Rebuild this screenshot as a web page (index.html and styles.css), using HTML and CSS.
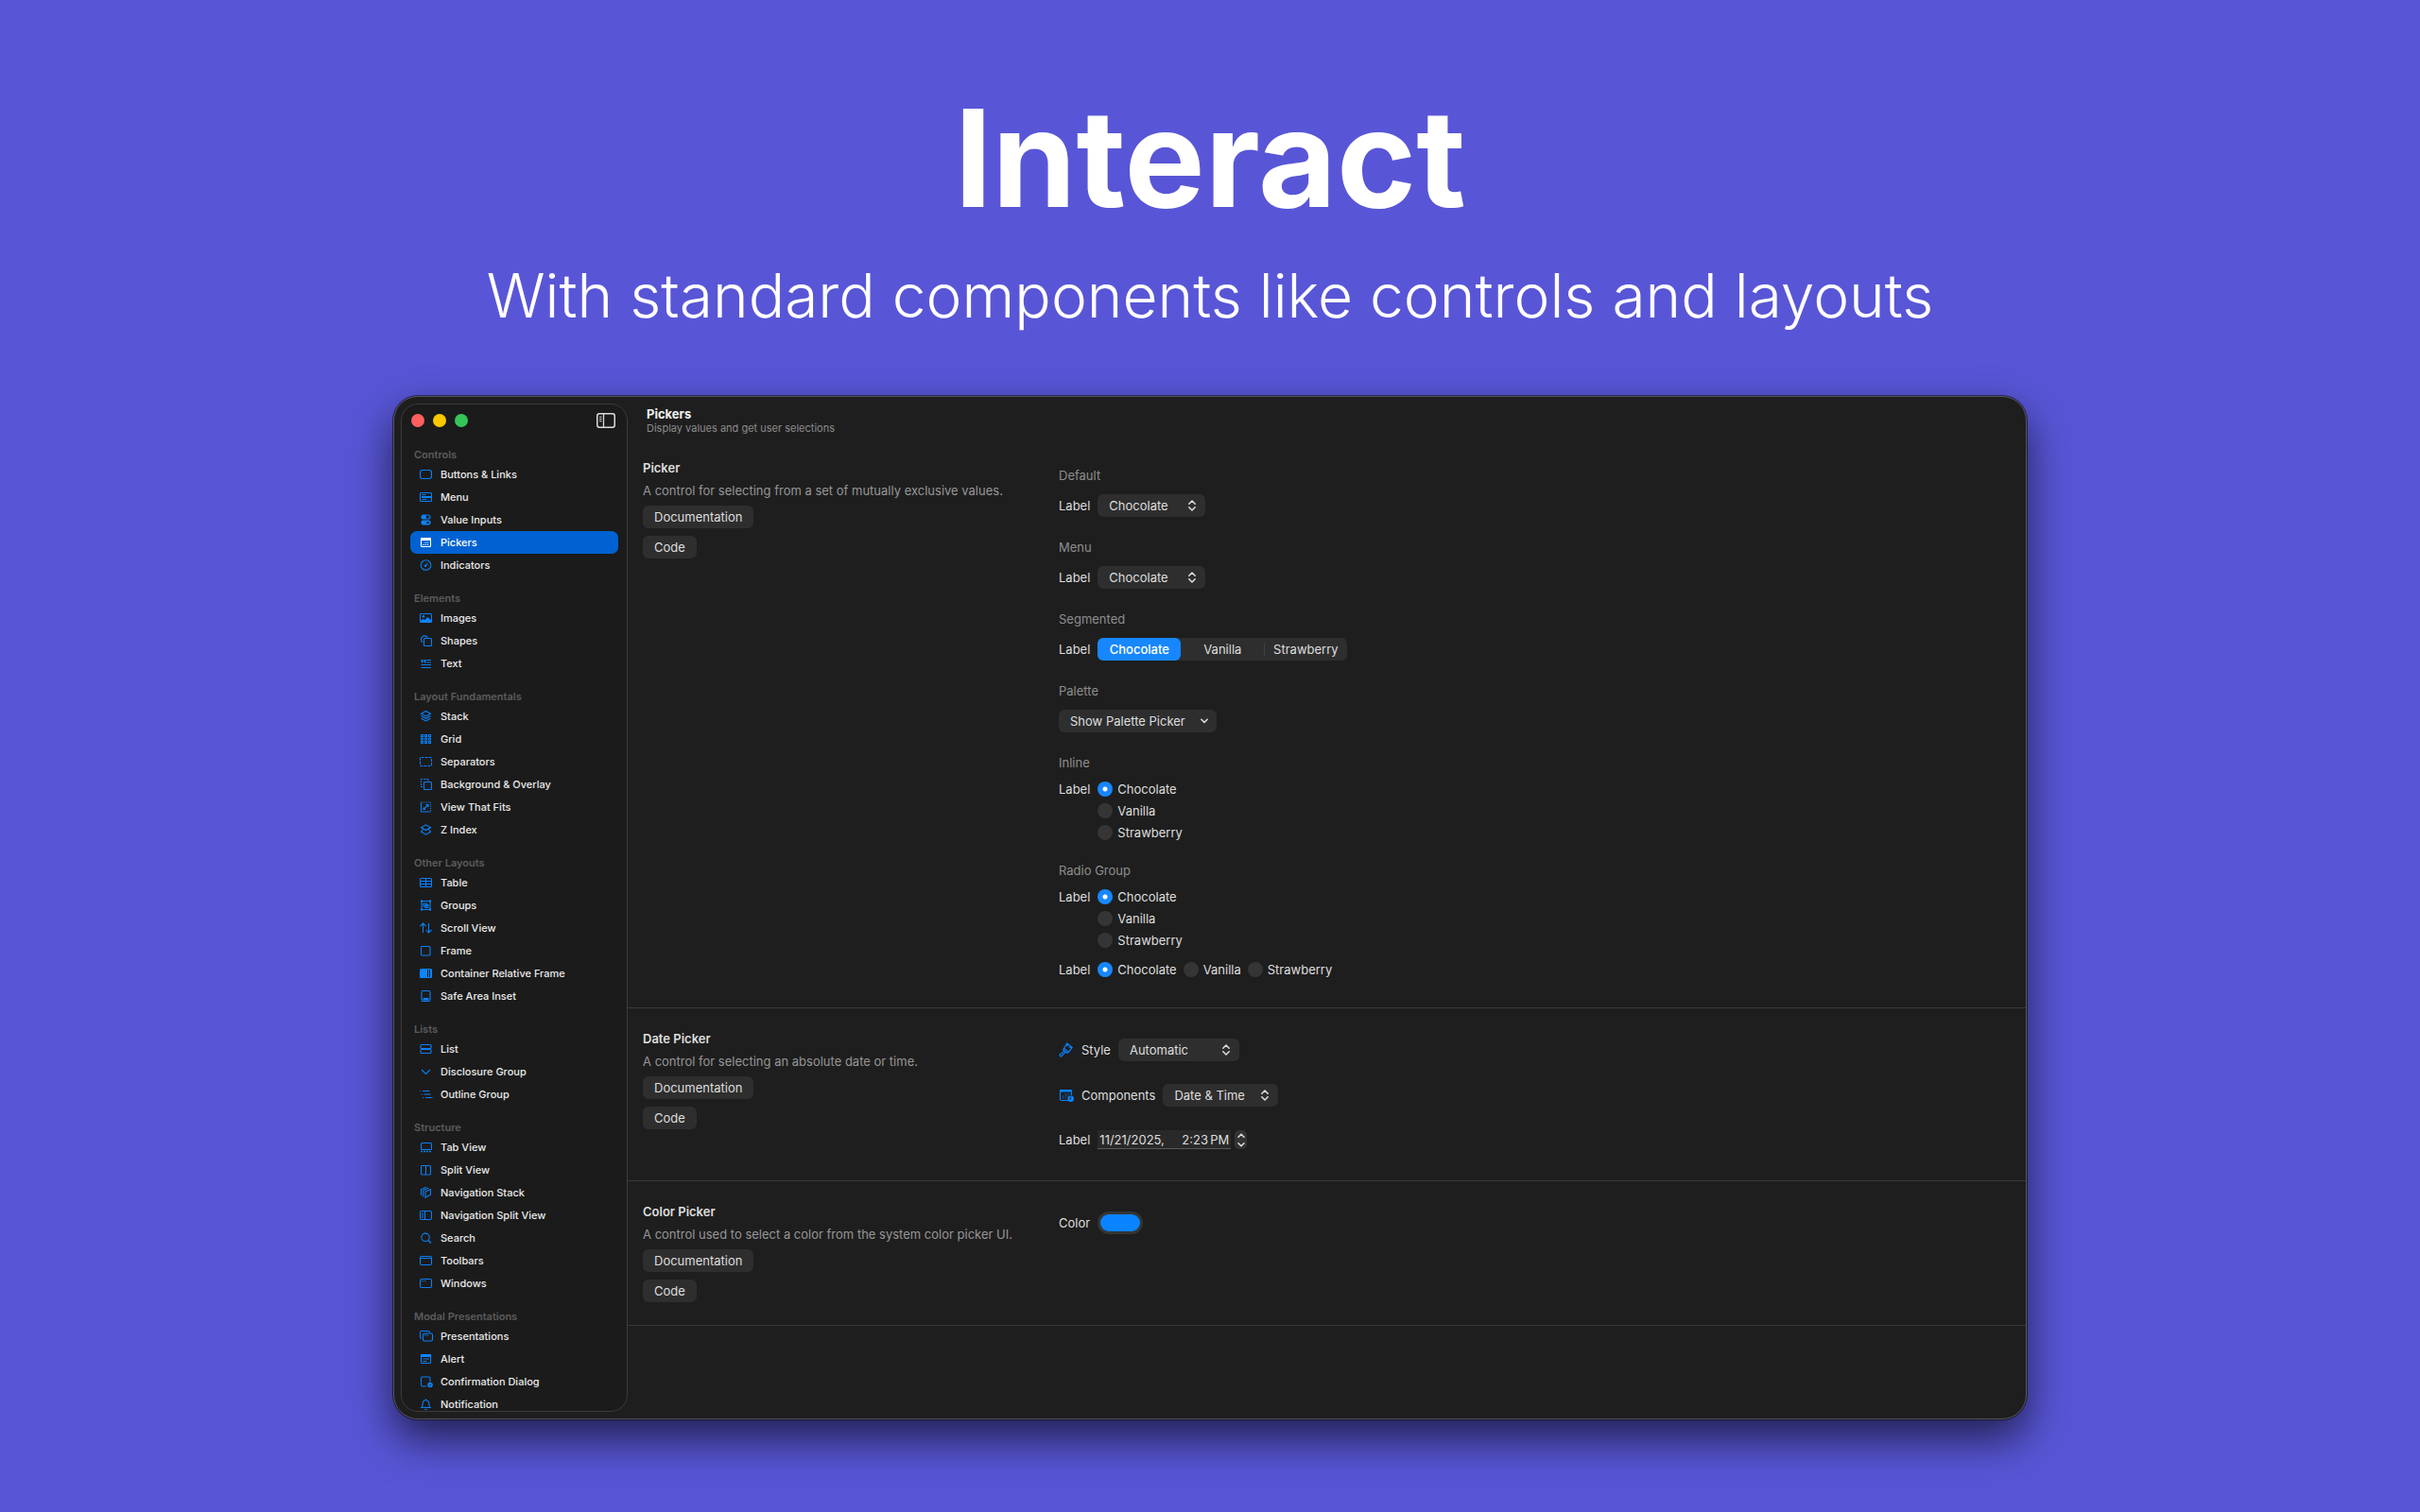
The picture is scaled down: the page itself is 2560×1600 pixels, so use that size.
FILE: index.html
```html
<!DOCTYPE html>
<html lang="en">
<head>
<meta charset="utf-8">
<title>Interact</title>
<link rel="stylesheet" href="styles.css">
</head>
<body>
<header class="hero">
  <h1 class="hero-title">Interact</h1>
  <p class="hero-subtitle">With standard components like controls and layouts</p>
</header>

<main class="window">
  <aside class="sidebar">
    <div class="titlebar">
      <button class="light light-close" type="button" aria-label="Close"></button>
      <button class="light light-minimize" type="button" aria-label="Minimize"></button>
      <button class="light light-zoom" type="button" aria-label="Zoom"></button>
      <button class="sidebar-toggle" type="button" aria-label="Toggle sidebar">
        <svg width="20" height="16" viewBox="0 0 20 16"><rect x=".75" y=".75" width="18.5" height="14.5" rx="2.5" fill="none" stroke="#dcdcdc" stroke-width="1.5"/><path d="M7.5 1v14" stroke="#dcdcdc" stroke-width="1.3"/><path d="M3 4.3h2.500M3 6.500h2.500M3 8.700h2.500" stroke="#dcdcdc" stroke-width="1.100"/></svg>
      </button>
    </div>
    <nav class="nav">
      <h2 class="nav-heading">Controls</h2>
      <a class="nav-item" href="#"><svg class="icon" viewBox="0 0 16 14"><rect x="1.500" y="2.500" width="12" height="9" rx="2.500"/></svg>Buttons &amp; Links</a>
      <a class="nav-item" href="#"><svg class="icon" viewBox="0 0 16 14"><rect x="1.500" y="2.500" width="12" height="9" rx="1"/><path d="M3.500 4.500h4M3.500 9.500h5"/><path class="fill" d="M3 6h11v2H3z"/></svg>Menu</a>
      <a class="nav-item" href="#"><svg class="icon" viewBox="0 0 16 14"><rect x="3" y="2" width="9" height="4" rx="2"/><rect class="fill" x="3" y="2" width="5" height="4" rx="1.500"/><rect class="fill" x="2.500" y="7.500" width="10" height="5" rx="2"/><rect class="hole" x="8" y="9" width="3" height="2" rx="1"/></svg>Value Inputs</a>
      <a class="nav-item nav-item-selected" href="#" aria-current="page"><svg class="icon" viewBox="0 0 16 14"><rect x="2.500" y="2.500" width="10" height="9" rx="1"/><path class="fill" d="M2 2h11v3H2z"/><path d="M4.300 9.500h1.200M6.500 9.500h1.200M8.700 9.500h1.200M6.500 7.300h1.200M8.700 7.300h1.200"/></svg>Pickers</a>
      <a class="nav-item" href="#"><svg class="icon" viewBox="0 0 16 14"><circle cx="7.500" cy="7" r="5.300"/><path d="M7 7.800 9.500 5"/><circle class="fill" cx="7" cy="7.700" r="1.200"/><path stroke-width=".7" d="M4.500 7h.5M7.500 3.500v.7M5 4.600l.5.5M10.500 7.500h.5"/></svg>Indicators</a>

      <h2 class="nav-heading">Elements</h2>
      <a class="nav-item" href="#"><svg class="icon" viewBox="0 0 16 14"><rect x="1.500" y="2.500" width="12" height="9" rx="1"/><circle class="fill" cx="5" cy="5.200" r="1.200"/><path class="fill" d="M2 9.500 4.500 7.800 6 9 9.500 6 13 9.200V11.500H2z"/></svg>Images</a>
      <a class="nav-item" href="#"><svg class="icon" viewBox="0 0 16 14"><path d="M4 8.800A3.800 3.800 0 1 1 9.300 3.500"/><rect x="5.500" y="4.500" width="8" height="8" rx="1"/></svg>Shapes</a>
      <a class="nav-item" href="#"><svg class="icon" viewBox="0 0 16 14"><path d="M8.500 3.500H13M8.500 6H13M2.500 8.500H13M2.500 11.500H13"/><path class="fill" d="M2.500 3h2v3L3 7V5h-.5zM5.500 3h2v3L6 7V5h-.5z"/></svg>Text</a>

      <h2 class="nav-heading">Layout Fundamentals</h2>
      <a class="nav-item" href="#"><svg class="icon" viewBox="0 0 16 14"><path d="M2.500 4.200 7.500 1.500l5 2.700-5 2.700zM2.500 6.600l5 2.700 5-2.700M2.500 9.200l5 2.700 5-2.700"/></svg>Stack</a>
      <a class="nav-item" href="#"><svg class="icon" viewBox="0 0 16 14"><path d="M2.500 2.500h2v2h-2zM6.500 2.500h2v2h-2zM10.500 2.500h2v2h-2zM2.500 6h2v2h-2zM6.500 6h2v2h-2zM10.500 6h2v2h-2zM2.500 9.500h2v2h-2zM6.500 9.500h2v2h-2zM10.500 9.500h2v2h-2z"/></svg>Grid</a>
      <a class="nav-item" href="#"><svg class="icon" viewBox="0 0 16 14"><rect x="1.500" y="2.500" width="12" height="9" rx="1" stroke-dasharray="3 1"/></svg>Separators</a>
      <a class="nav-item" href="#"><svg class="icon" viewBox="0 0 16 14"><path stroke-dasharray="2 1" d="M4 9.500H2.500v-8h8V3"/><rect x="5.500" y="4.500" width="8" height="8" rx="1"/></svg>Background &amp; Overlay</a>
      <a class="nav-item" href="#"><svg class="icon" viewBox="0 0 16 14"><path stroke-dasharray="1 1" d="M2.500 2H12.500V12"/><path d="M2.500 2v10H12.500M5 9.500l5-5M7.500 4.500H10V7M5 7.500v2h2"/></svg>View That Fits</a>
      <a class="nav-item" href="#"><svg class="icon" viewBox="0 0 16 14"><path d="M2.500 4.700 7.500 1.800l5 2.900-5 2.900zM4.500 6.500l-2 2.800 5 2.900 5-2.900-2-2.800"/></svg>Z Index</a>

      <h2 class="nav-heading">Other Layouts</h2>
      <a class="nav-item" href="#"><svg class="icon" viewBox="0 0 16 14"><rect x="1.500" y="2.500" width="12" height="9" rx="1"/><path d="M7.500 2.500v9M1.500 5.500h12M1.500 8.500h12"/></svg>Table</a>
      <a class="nav-item" href="#"><svg class="icon" viewBox="0 0 16 14"><rect x="3" y="2.500" width="9" height="9"/><path d="M5 5h3.500v3H5zM7 6.500h3v3H7z"/><path class="fill" d="M2 1.500h2v2H2zM11 1.500h2v2h-2zM2 10.500h2v2H2zM11 10.500h2v2h-2z"/></svg>Groups</a>
      <a class="nav-item" href="#"><svg class="icon" viewBox="0 0 16 14"><path d="M4.500 12V2.300M1.500 5l3-3 3 3M10.500 2v9.700M7.800 9l2.700 3 3-3"/></svg>Scroll View</a>
      <a class="nav-item" href="#"><svg class="icon" viewBox="0 0 16 14"><rect x="2.500" y="2.500" width="9.500" height="9.500" rx="1"/></svg>Frame</a>
      <a class="nav-item" href="#"><svg class="icon" viewBox="0 0 16 14"><rect x="1.500" y="2.500" width="12" height="9" rx="1"/><path class="fill" d="M2 3h7v8H2zM10 3h1v8h-1zM12 3h2v8h-2z"/></svg>Container Relative Frame</a>
      <a class="nav-item" href="#"><svg class="icon" viewBox="0 0 16 14"><rect x="3" y="1.500" width="9" height="11" rx="1.500"/><path class="fill" d="M4.500 9h6v2.500h-6z"/></svg>Safe Area Inset</a>

      <h2 class="nav-heading">Lists</h2>
      <a class="nav-item" href="#"><svg class="icon" viewBox="0 0 16 14"><rect x="2" y="2.500" width="11" height="4" rx="1"/><rect x="2" y="7.500" width="11" height="4" rx="1"/></svg>List</a>
      <a class="nav-item" href="#"><svg class="icon" viewBox="0 0 16 14"><path d="m3 5 4.500 4.500L12 5"/></svg>Disclosure Group</a>
      <a class="nav-item" href="#"><svg class="icon" viewBox="0 0 16 14"><path d="M1.200 3.500h1M4 3.500h7.500M2.500 7h1M5.500 7h7M4 10.500h1M7 10.500h7.500"/></svg>Outline Group</a>

      <h2 class="nav-heading">Structure</h2>
      <a class="nav-item" href="#"><svg class="icon" viewBox="0 0 16 14"><rect x="2.500" y="2.500" width="11" height="7" rx="1"/><path stroke-width="1.500" stroke-dasharray="2 1" d="M2 11.500h12"/></svg>Tab View</a>
      <a class="nav-item" href="#"><svg class="icon" viewBox="0 0 16 14"><rect x="2.500" y="2.500" width="10" height="9.500" rx="1"/><path d="M7.500 2.500V12"/></svg>Split View</a>
      <a class="nav-item" href="#"><svg class="icon" viewBox="0 0 16 14"><path d="M7 6v6.300l5.500-3.100V3.500zM4.700 11.500V4.800L10.300 2M2.500 10V3.800l5.300-2.600"/></svg>Navigation Stack</a>
      <a class="nav-item" href="#"><svg class="icon" viewBox="0 0 16 14"><rect x="1.500" y="2.500" width="12" height="9" rx="1.500"/><path d="M6.500 2.500v9M3 5h2M3 7h2M3 9h2"/></svg>Navigation Split View</a>
      <a class="nav-item" href="#"><svg class="icon" viewBox="0 0 16 14"><circle cx="7" cy="6.300" r="4.200"/><path stroke-width="1.300" d="m10 9.500 3 3"/></svg>Search</a>
      <a class="nav-item" href="#"><svg class="icon" viewBox="0 0 16 14"><rect x="1.500" y="2.500" width="12" height="9" rx="1.500"/><path d="M1.500 4.500h12"/></svg>Toolbars</a>
      <a class="nav-item" href="#"><svg class="icon" viewBox="0 0 16 14"><rect x="1.500" y="2.500" width="12" height="9" rx="1.500"/><path d="M3 4.500h1M4.700 4.500h1M6.400 4.500h1"/></svg>Windows</a>

      <h2 class="nav-heading">Modal Presentations</h2>
      <a class="nav-item" href="#"><svg class="icon" viewBox="0 0 16 14"><path d="M3 9.500a1.500 1.500 0 0 1-1.500-1.500V3A1.500 1.500 0 0 1 3 1.500h7A1.500 1.500 0 0 1 11.500 3"/><rect x="4.500" y="4" width="10" height="8" rx="1.500"/><path d="M6 6h1M7.500 6h1M9 6h1"/></svg>Presentations</a>
      <a class="nav-item" href="#"><svg class="icon" viewBox="0 0 16 14"><rect x="2.500" y="2.500" width="10" height="9" rx="1"/><path class="fill" d="M2 2h11v3H2z"/><path d="M4.500 7h6.500M4.500 9.500h4"/></svg>Alert</a>
      <a class="nav-item" href="#"><svg class="icon" viewBox="0 0 16 14"><path d="M8 12H4A1.500 1.500 0 0 1 2.500 10.500v-7A1.500 1.500 0 0 1 4 2h6.500A1.500 1.500 0 0 1 12 3.500V7"/><circle class="fill" cx="12" cy="10.500" r="2.800"/><path class="cut" d="m10.800 10.600.9.9 1.500-2"/></svg>Confirmation Dialog</a>
      <a class="nav-item" href="#"><svg class="icon" viewBox="0 0 16 14"><path d="M3 10.500c1-1 1.200-2 1.200-4.500a3.300 3.300 0 0 1 6.600 0c0 2.500.2 3.500 1.200 4.500zM6.200 12.500h2.600M7.500 1.200v1"/></svg>Notification</a>
    </nav>
  </aside>

  <div class="content">
    <header class="toolbar">
      <h2 class="toolbar-title">Pickers</h2>
      <p class="toolbar-subtitle">Display values and get user selections</p>
    </header>

    <section class="section">
      <div class="info">
        <h3 class="info-title">Picker</h3>
        <p class="info-text">A control for selecting from a set of mutually exclusive values.</p>
        <button class="button" type="button">Documentation</button>
        <button class="button" type="button">Code</button>
      </div>
      <div class="demos">
        <div class="demo">
          <h4 class="demo-title">Default</h4>
          <div class="row">
            <label for="default-picker">Label</label>
            <span class="select select-flavor"><select id="default-picker"><option>Chocolate</option><option>Vanilla</option><option>Strawberry</option></select><svg class="arrows" viewBox="0 0 8 12"><path d="m.8 4.300 3.200-3.300 3.200 3.300M.8 7.700l3.200 3.300 3.200-3.300"/></svg></span>
          </div>
        </div>
        <div class="demo">
          <h4 class="demo-title">Menu</h4>
          <div class="row">
            <label for="menu-picker">Label</label>
            <span class="select select-flavor"><select id="menu-picker"><option>Chocolate</option><option>Vanilla</option><option>Strawberry</option></select><svg class="arrows" viewBox="0 0 8 12"><path d="m.8 4.300 3.200-3.300 3.200 3.300M.8 7.700l3.200 3.300 3.200-3.300"/></svg></span>
          </div>
        </div>
        <div class="demo">
          <h4 class="demo-title">Segmented</h4>
          <div class="row" role="radiogroup" aria-labelledby="segmented-label">
            <span id="segmented-label">Label</span>
            <div class="segments">
              <label class="segment"><input type="radio" name="segmented" checked>Chocolate</label>
              <label class="segment"><input type="radio" name="segmented">Vanilla</label>
              <label class="segment"><input type="radio" name="segmented">Strawberry</label>
            </div>
          </div>
        </div>
        <div class="demo">
          <h4 class="demo-title">Palette</h4>
          <button class="button menu-button" type="button">Show Palette Picker<svg class="chevron" viewBox="0 0 8 6"><path d="m.8 1.200 3.200 3.200 3.200-3.200"/></svg></button>
        </div>
        <div class="demo">
          <h4 class="demo-title">Inline</h4>
          <div class="row row-top" role="radiogroup" aria-labelledby="inline-label">
            <span id="inline-label">Label</span>
            <div class="radios">
              <label class="radio"><input type="radio" name="inline" checked>Chocolate</label>
              <label class="radio"><input type="radio" name="inline">Vanilla</label>
              <label class="radio"><input type="radio" name="inline">Strawberry</label>
            </div>
          </div>
        </div>
        <div class="demo">
          <h4 class="demo-title">Radio Group</h4>
          <div class="row row-top" role="radiogroup" aria-labelledby="group-label">
            <span id="group-label">Label</span>
            <div class="radios">
              <label class="radio"><input type="radio" name="group" checked>Chocolate</label>
              <label class="radio"><input type="radio" name="group">Vanilla</label>
              <label class="radio"><input type="radio" name="group">Strawberry</label>
            </div>
          </div>
          <div class="row row-last" role="radiogroup" aria-labelledby="across-label">
            <span id="across-label">Label</span>
            <div class="radios radios-across">
              <label class="radio"><input type="radio" name="across" checked>Chocolate</label>
              <label class="radio"><input type="radio" name="across">Vanilla</label>
              <label class="radio"><input type="radio" name="across">Strawberry</label>
            </div>
          </div>
        </div>
      </div>
    </section>

    <section class="section">
      <div class="info">
        <h3 class="info-title">Date Picker</h3>
        <p class="info-text">A control for selecting an absolute date or time.</p>
        <button class="button" type="button">Documentation</button>
        <button class="button" type="button">Code</button>
      </div>
      <div class="demos">
        <div class="row">
          <label class="icon-label" for="date-style"><svg class="label-icon" viewBox="0 0 16 16"><path d="M5.500 6.200 8.800 1l5.400 4.400-3.700 5zM8.800 1l.3 3.500M14.200 5.400l-3.400-.2M5.500 6.200 4.700 8l4 3.200 1.800-.8M6 9.200l-4.600 3.600c-1 1.100.6 2.700 1.700 1.700L7.300 10.200"/></svg>Style</label>
          <span class="select select-style"><select id="date-style"><option>Automatic</option></select><svg class="arrows" viewBox="0 0 8 12"><path d="m.8 4.300 3.200-3.300 3.200 3.300M.8 7.700l3.200 3.300 3.200-3.300"/></svg></span>
        </div>
        <div class="row">
          <label class="icon-label" for="date-parts"><svg class="label-icon" viewBox="0 0 16 16"><path d="M10 13.500H3A1.500 1.500 0 0 1 1.500 12V3.500h12V8"/><path class="fill" d="M1 4.500V3.200C1 2.500 1.500 2 2.200 2h10.600c.7 0 1.200.500 1.200 1.200V4.500z"/><path d="M6.500 7h1M8.500 7h1M10.500 7h1M4 9h1M6.500 9h1M8.500 9h1M4 11h1M6.500 11h1"/><circle class="fill" cx="12.700" cy="11.700" r="3.300"/><path class="cut" d="M12.700 9.500V12h-1.500"/></svg>Components</label>
          <span class="select select-parts"><select id="date-parts"><option>Date &amp; Time</option></select><svg class="arrows" viewBox="0 0 8 12"><path d="m.8 4.300 3.200-3.300 3.200 3.300M.8 7.700l3.200 3.300 3.200-3.300"/></svg></span>
        </div>
        <div class="row row-date">
          <label for="date-value">Label</label>
          <div class="date-field">
            <input class="date-input" id="date-value" type="text" value="11/21/2025,">
            <input class="time-input" type="text" value="2:23&#8239;PM" aria-label="Time">
          </div>
          <div class="stepper">
            <button type="button" aria-label="Increase"><svg viewBox="0 0 8 5"><path d="m1 4.200 3-3 3 3"/></svg></button>
            <button type="button" aria-label="Decrease"><svg viewBox="0 0 8 5"><path d="m1 .8 3 3 3-3"/></svg></button>
          </div>
        </div>
      </div>
    </section>

    <section class="section">
      <div class="info">
        <h3 class="info-title">Color Picker</h3>
        <p class="info-text">A control used to select a color from the system color picker UI.</p>
        <button class="button" type="button">Documentation</button>
        <button class="button" type="button">Code</button>
      </div>
      <div class="demos">
        <div class="row">
          <label for="color-value">Color</label>
          <input class="color-well" id="color-value" type="color" value="#0a84ff">
        </div>
      </div>
    </section>
  </div>
</main>
</body>
</html>
```

FILE: styles.css
```css
* {
  box-sizing: border-box;
}

body {
  margin: 0;
  min-height: 100vh;
  background: #5856d6;
  color: #dedede;
  font: 13px/16px Inter, sans-serif;
}

h1, h2, h3, h4, p {
  margin: 0;
}

button, select, input {
  font: inherit;
  color: inherit;
  margin: 0;
  padding: 0;
  border: 0;
}

/* Hero */

.hero {
  padding-top: 80px;
  color: #fff;
  text-align: center;
}

.hero-title {
  font-size: 143px;
  line-height: 174px;
  font-weight: 700;
}

.hero-subtitle {
  margin-top: 20px;
  font-size: 64px;
  line-height: 78px;
  font-weight: 350;
}

/* Window */

.window {
  display: grid;
  grid-template-columns: 240px minmax(0, 1fr);
  grid-template-rows: minmax(0, 1fr);
  width: 67.5%;
  min-height: 0;
  aspect-ratio: 1728 / 1083;
  margin: 67px auto 0;
  padding: 7px 0 7px 7px;
  border: 1px solid #57575c;
  border-radius: 26px;
  background: #1e1e1e;
  box-shadow: 0 0 0 1px rgba(0, 0, 0, .5), 0 20px 46px rgba(0, 0, 0, .64);
  overflow: hidden;
}

/* Sidebar */

.sidebar {
  border: 1px solid #3c3c3c;
  border-radius: 18px;
  background: #1b1b1b;
  overflow: hidden;
}

.titlebar {
  display: flex;
  align-items: center;
  gap: 9px;
  padding: 9px 12px 0 10px;
}

.light {
  width: 14px;
  height: 14px;
  border-radius: 50%;
}

.light-close {
  background: #ff5f5e;
}

.light-minimize {
  background: #fcc800;
}

.light-zoom {
  background: #34c658;
}

.sidebar-toggle {
  margin-left: auto;
  height: 16px;
  background: none;
}

.sidebar-toggle svg {
  display: block;
}

.nav {
  padding: 5px 9px 0;
}

.nav-heading {
  padding: 14px 4px 0;
  color: #5c5c5c;
  font-size: 11px;
  line-height: 18px;
  font-weight: 600;
}

.nav-item {
  display: flex;
  align-items: center;
  gap: 7px;
  height: 24px;
  padding-left: 9px;
  border-radius: 7px;
  color: #eaeaea;
  font-size: 11px;
  font-weight: 500;
  text-decoration: none;
  white-space: nowrap;
}

.nav-item-selected {
  background: #0062d2;
  color: #fff;
}

.icon {
  flex: none;
  width: 16px;
  height: 14px;
  fill: none;
  stroke: #0a80f8;
  stroke-width: 1.1;
}

.icon .fill {
  fill: #0a84ff;
  stroke: none;
}

.icon .hole {
  fill: #1b1b1b;
  stroke: none;
}

.icon .cut {
  stroke: #1b1b1b;
  stroke-width: .8;
}

.nav-item-selected .icon {
  stroke: #fff;
}

.nav-item-selected .fill {
  fill: #fff;
}

/* Detail pane */

.toolbar {
  padding: 3px 20px 0;
}

.toolbar-title {
  font-size: 13px;
  font-weight: 700;
  color: #f0f0f0;
}

.toolbar-subtitle {
  font-size: 11px;
  line-height: 14px;
  color: #8c8c8c;
}

.section {
  display: grid;
  grid-template-columns: 440px minmax(0, 1fr);
  padding: 0 16px;
  border-bottom: 1px solid #383838;
}

.toolbar + .section {
  margin-top: 3px;
}

.info {
  display: flex;
  flex-direction: column;
  align-items: flex-start;
  gap: 8px;
  padding: 24px 0;
}

.info-title {
  font-size: 13px;
  font-weight: 600;
}

.info-text {
  color: #969696;
}

.button {
  height: 24px;
  padding: 0 12px;
  border-radius: 6px;
  background: #2e2e2e;
}

.demos {
  display: flex;
  flex-direction: column;
  gap: 24px;
  padding: 32px 0;
}

.demo {
  display: flex;
  flex-direction: column;
  align-items: flex-start;
  gap: 12px;
}

.demo-title {
  color: #8e8e8e;
  font-size: 13px;
  font-weight: 400;
}

.row {
  display: flex;
  align-items: center;
  gap: 8px;
}

.row-top {
  align-items: flex-start;
}

.row-last {
  padding-top: 3px;
}

.row-date {
  height: 22px;
}

/* Pop-up buttons */

.select {
  display: grid;
  align-items: center;
  border-radius: 6px;
  background: #2e2e2e;
}

.select select,
.select svg {
  grid-area: 1 / 1;
}

.select select {
  height: 24px;
  padding: 0 28px 0 12px;
  background: none;
  appearance: none;
}

.select-flavor {
  width: 114px;
}

.select-style {
  width: 128px;
}

.select-parts {
  width: 122px;
}

.arrows,
.chevron {
  width: 8px;
  fill: none;
  stroke: #dcdcdc;
  stroke-width: 1.5;
  stroke-linecap: round;
  stroke-linejoin: round;
}

.arrows {
  height: 12px;
  margin-right: 10px;
  justify-self: end;
  pointer-events: none;
}

.menu-button {
  display: flex;
  align-items: center;
  justify-content: space-between;
  width: 167px;
  padding-right: 9px;
}

.chevron {
  height: 6px;
}

/* Segmented control */

.segments {
  display: grid;
  grid-template-columns: repeat(3, 88px);
  border-radius: 6px;
  background: #2e2e2e;
}

.segment {
  display: flex;
  align-items: center;
  justify-content: center;
  height: 24px;
  border-radius: 6px;
}

.segment:has(:checked) {
  background: #1787ff;
  color: #fff;
  font-weight: 500;
}

.segment:last-child {
  background: linear-gradient(#424242, #424242) 0 5px / 1px 14px no-repeat;
}

.segment input {
  width: 0;
  height: 0;
  appearance: none;
}

/* Radio buttons */

.radios {
  display: flex;
  flex-direction: column;
  gap: 7px;
}

.radios-across {
  flex-direction: row;
}

.radio {
  display: flex;
  align-items: center;
  gap: 5px;
}

.radio input {
  width: 16px;
  height: 16px;
  border-radius: 50%;
  background: #353535;
  appearance: none;
}

.radio input:checked {
  background: radial-gradient(circle, #fff 2px, #1787ff 3px);
}

/* Labels with an icon */

.icon-label {
  display: flex;
  align-items: center;
  gap: 8px;
}

.label-icon {
  width: 16px;
  height: 16px;
  fill: none;
  stroke: #0a80f8;
  stroke-width: 1.2;
  stroke-linejoin: round;
}

.label-icon .fill {
  fill: #0a84ff;
  stroke: none;
}

.label-icon .cut {
  stroke: #1e1e1e;
  stroke-width: .8;
}

/* Date field */

.date-field {
  display: flex;
  justify-content: space-between;
  width: 141px;
  height: 20px;
  padding: 0 2px;
  border-bottom: 1px solid #5a5a5a;
  background: #292929;
}

.date-field input {
  background: none;
}

.date-input {
  width: 80px;
}

.time-input {
  width: 54px;
  text-align: right;
}

.stepper {
  display: flex;
  flex-direction: column;
  width: 13px;
  height: 20px;
  margin-left: -4px;
  border-radius: 5px;
  background: #333;
  overflow: hidden;
}

.stepper button {
  display: flex;
  flex: 1;
  align-items: center;
  justify-content: center;
  background: none;
}

.stepper svg {
  width: 8px;
  height: 5px;
  fill: none;
  stroke: #dcdcdc;
  stroke-width: 1.5;
  stroke-linecap: round;
}

/* Color well */

.color-well {
  width: 48px;
  height: 24px;
  padding: 3px;
  border-radius: 12px;
  background: #353535;
  appearance: none;
}

.color-well::-webkit-color-swatch-wrapper {
  padding: 0;
}

.color-well::-webkit-color-swatch {
  border: 0;
  border-radius: 9px;
}
```
